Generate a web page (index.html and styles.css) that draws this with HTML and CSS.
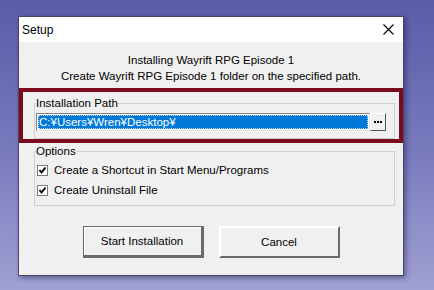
FILE: index.html
```html
<!DOCTYPE html>
<html>
<head>
<meta charset="utf-8">
<link rel="stylesheet" href="styles.css">
</head>
<body>
<div class="window">
  <div class="titlebar">
    <span class="title">Setup</span>
    <svg class="close" width="11" height="11" viewBox="0 0 11 11"><path d="M0.5 0.5 L10.5 10.5 M10.5 0.5 L0.5 10.5" stroke="#000" stroke-width="1.1" fill="none"/></svg>
  </div>
  <div class="content">
    <div class="header">
      <div>Installing Wayrift RPG Episode 1</div>
      <div>Create Wayrift RPG Episode 1 folder on the specified path.</div>
    </div>
    <div class="pathbox">
      <fieldset class="group">
        <legend>Installation Path</legend>
        <div class="pathrow">
          <div class="textbox"><span class="sel">C:¥Users¥Wren¥Desktop¥</span></div>
          <div class="browse"><span class="dots"></span></div>
        </div>
      </fieldset>
    </div>
    <fieldset class="group options">
      <legend>Options</legend>
      <label class="check"><svg width="11" height="11" viewBox="0 0 11 11"><rect x="0.5" y="0.5" width="10" height="10" fill="#fff" stroke="#7a7a7a"/><path d="M2.5 5 L4.5 7.5 L8.5 2.5" stroke="#000" stroke-width="2" fill="none"/></svg><span>Create a Shortcut in Start Menu/Programs</span></label>
      <label class="check"><svg width="11" height="11" viewBox="0 0 11 11"><rect x="0.5" y="0.5" width="10" height="10" fill="#fff" stroke="#7a7a7a"/><path d="M2.5 5 L4.5 7.5 L8.5 2.5" stroke="#000" stroke-width="2" fill="none"/></svg><span>Create Uninstall File</span></label>
    </fieldset>
    <div class="buttons">
      <div class="btn default">Start Installation</div>
      <div class="btn">Cancel</div>
    </div>
  </div>
</div>
</body>
</html>
```

FILE: styles.css
```css
html, body {
  margin: 0;
  padding: 0;
}
body {
  width: 434px;
  height: 290px;
  overflow: hidden;
  background: linear-gradient(180deg, #5b5ba8 0%, #7878bd 50%, #a0a0d3 100%);
  font-family: "Liberation Sans", Arial, sans-serif;
  font-size: 11.5px;
  color: #000;
  padding: 16px 0 0 18px;
  box-sizing: border-box;
}
.window {
  width: 386px;
  height: 260px;
  box-sizing: border-box;
  border: 1px solid #46466c;
  background: #f0f0f0;
  box-shadow: 2px 2px 5px rgba(20, 20, 60, 0.45);
  display: flex;
  flex-direction: column;
}
.titlebar {
  height: 25px;
  background: #fff;
  display: flex;
  align-items: center;
  justify-content: space-between;
  padding: 0 9px 0 3px;
  flex: none;
}
.title {
  font-size: 12px;
}
.close {
  display: block;
}
.content {
  flex: 1;
  padding-top: 10px;
  display: flex;
  flex-direction: column;
}
.header {
  text-align: center;
  line-height: 16px;
}
.pathbox {
  margin-top: 4px;
  border: 4px solid #7c0a1f;
  padding: 0 4px 0 11px;
}
.group {
  margin: 0;
  border: 1px solid #d0d0d0;
  min-width: 0;
}
.group legend {
  padding: 0;
  margin-left: 0;
  line-height: 14px;
}
.pathbox .group {
  margin-top: 4px;
  padding: 3px 8px 7px 1px;
}
.pathrow {
  display: flex;
  height: 18px;
}
.textbox {
  flex: 1;
  border: 1px solid;
  border-color: #838383 #e3e3e3 #e3e3e3 #838383;
  background: #fff;
  padding: 1px;
  display: flex;
}
.sel {
  flex: 1;
  background: #0078d7;
  color: #fff;
  outline: 1px dotted #bcd9f3;
  outline-offset: -1px;
  line-height: 14px;
  padding-left: 1px;
}
.browse {
  width: 16px;
  box-sizing: border-box;
  border: 1px solid;
  border-color: #fff #555 #555 #fff;
  background: #f0f0f0;
  display: flex;
  align-items: center;
  justify-content: center;
}
.dots {
  width: 2px;
  height: 2px;
  background: #000;
  box-shadow: 3px 0 0 #000, -3px 0 0 #000;
}
.options {
  margin: 1px 8px 0 15px;
  padding: 2px 0 5px 1px;
}
.check {
  display: flex;
  align-items: center;
  height: 20px;
  padding-left: 1px;
}
.check svg {
  display: block;
  margin-right: 6px;
}
.buttons {
  display: flex;
  justify-content: center;
  gap: 15px;
  margin-top: 20px;
}
.btn {
  width: 121px;
  height: 32px;
  box-sizing: border-box;
  border: 2px solid;
  border-color: #fff #6a6a6a #6a6a6a #fff;
  background: #f0f0f0;
  display: flex;
  align-items: center;
  justify-content: center;
}
.btn.default {
  border: 1px solid #6a6a6a;
  border-bottom-width: 3px;
  border-right-width: 3px;
  box-shadow: inset 1px 1px 0 #fff;
}
```
